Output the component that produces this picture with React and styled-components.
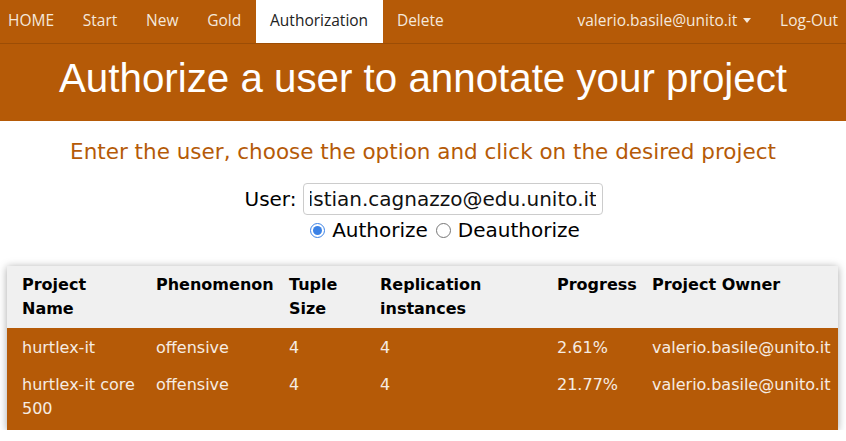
import React, { useEffect, useRef, useState } from 'react';
import styled, { createGlobalStyle } from 'styled-components';

const ORANGE = '#b55a07';

const GlobalStyle = createGlobalStyle`
  body {
    margin: 0;
    font-family: "DejaVu Sans", sans-serif;
    background: #fff;
  }
`;

const NavBar = styled.nav`
  display: flex;
  justify-content: space-between;
  align-items: stretch;
  height: 44px;
  background: ${ORANGE};
  border-bottom: 1px solid #9c4d05;
  box-sizing: border-box;
  font-family: "Open Sans", sans-serif;
  font-size: 15.5px;
`;

const NavGroup = styled.div`
  display: flex;
  align-items: stretch;
`;

const NavItem = styled.a`
  display: flex;
  align-items: center;
  padding: 0 ${(p) => (p.$last ? '8px' : '14.4px')} 4px ${(p) => (p.$first ? '8px' : '14.4px')};
  color: ${(p) => (p.$active ? '#222' : '#f4e8dc')};
  background: ${(p) => (p.$active ? '#fff' : 'transparent')};
  text-decoration: none;
  cursor: pointer;
  white-space: nowrap;
`;

const Caret = styled.span`
  display: inline-block;
  margin-left: 6px;
  margin-top: 2px;
  border-left: 4px solid transparent;
  border-right: 4px solid transparent;
  border-top: 5px solid #f4e8dc;
`;

const Banner = styled.header`
  background: ${ORANGE};
  height: 77px;
  box-sizing: border-box;
  padding-bottom: 8px;
  display: flex;
  align-items: center;
  justify-content: center;
`;

const Title = styled.h1`
  margin: 0;
  color: #fff;
  font-family: "Liberation Sans", Arial, sans-serif;
  font-weight: normal;
  font-size: 40.3px;
`;

const Subtitle = styled.h2`
  margin: 19px 0 0;
  text-align: center;
  color: ${ORANGE};
  font-weight: normal;
  font-size: 21.5px;
  line-height: 24px;
`;

const Form = styled.form`
  display: flex;
  flex-direction: column;
  align-items: center;
  margin-top: 19px;
  font-size: 20px;
`;

const UserRow = styled.label`
  display: flex;
  align-items: center;
  gap: 7px;
  margin-left: 2px;
`;

const UserInput = styled.input`
  width: 300px;
  height: 32px;
  box-sizing: border-box;
  border: 1px solid #ccc;
  border-radius: 4px;
  padding: 0 6px;
  font-family: inherit;
  font-size: 20px;
  color: #111;
  outline: none;
`;

const RadioRow = styled.div`
  display: flex;
  align-items: center;
  margin-top: 3px;
  margin-left: 52px;
  line-height: 24px;
`;

const RadioLabel = styled.label`
  display: flex;
  align-items: center;
  gap: 7px;
  margin-right: 8px;
`;

const Radio = styled.input`
  margin: 0;
  width: 15px;
  height: 15px;
  accent-color: #3b82e6;
`;

const TableWrap = styled.div`
  margin: 24px 8px 0 7px;
  box-shadow: 0 1px 8px rgba(0, 0, 0, 0.35);
`;

const Table = styled.table`
  width: 100%;
  border-collapse: collapse;
  table-layout: fixed;
  font-size: 16px;
  line-height: 24px;
`;

const Th = styled.th`
  text-align: left;
  vertical-align: top;
  padding: 7px 4px 7px 15px;
  background: #f0f0f0;
  color: #000;
  font-weight: bold;
`;

const Row = styled.tr`
  background: ${ORANGE};
  color: #f6ece2;
  cursor: pointer;
`;

const Td = styled.td`
  vertical-align: top;
  padding: ${(p) => (p.$firstRow ? '8px' : '6px')} 4px ${(p) => (p.$lastRow ? '9px' : '7px')} 15px;
`;

const columns = [
  { label: 'Project Name', width: 134 },
  { label: 'Phenomenon', width: 133 },
  { label: 'Tuple Size', width: 91 },
  { label: 'Replication instances', width: 177 },
  { label: 'Progress', width: 95 },
  { label: 'Project Owner', width: 201 },
];

const projects = [
  ['hurtlex-it', 'offensive', '4', '4', '2.61%', 'valerio.basile@unito.it'],
  ['hurtlex-it core 500', 'offensive', '4', '4', '21.77%', 'valerio.basile@unito.it'],
];

const App = () => {
  const [user, setUser] = useState('cristian.cagnazzo@edu.unito.it');
  const [mode, setMode] = useState('authorize');
  const inputRef = useRef(null);

  // keep the end of the address visible, like after typing it
  useEffect(() => {
    if (inputRef.current) inputRef.current.scrollLeft = inputRef.current.scrollWidth;
  }, []);

  return (
    <>
      <GlobalStyle />
      <NavBar>
        <NavGroup>
          <NavItem $first>HOME</NavItem>
          <NavItem>Start</NavItem>
          <NavItem>New</NavItem>
          <NavItem>Gold</NavItem>
          <NavItem $active>Authorization</NavItem>
          <NavItem>Delete</NavItem>
        </NavGroup>
        <NavGroup>
          <NavItem>
            valerio.basile@unito.it
            <Caret />
          </NavItem>
          <NavItem $last>Log-Out</NavItem>
        </NavGroup>
      </NavBar>

      <Banner>
        <Title>Authorize a user to annotate your project</Title>
      </Banner>

      <Subtitle>Enter the user, choose the option and click on the desired project</Subtitle>

      <Form onSubmit={(e) => e.preventDefault()}>
        <UserRow>
          User:
          <UserInput ref={inputRef} value={user} onChange={(e) => setUser(e.target.value)} />
        </UserRow>
        <RadioRow>
          <RadioLabel>
            <Radio type="radio" name="mode" checked={mode === 'authorize'} onChange={() => setMode('authorize')} />
            Authorize
          </RadioLabel>
          <RadioLabel>
            <Radio type="radio" name="mode" checked={mode === 'deauthorize'} onChange={() => setMode('deauthorize')} />
            Deauthorize
          </RadioLabel>
        </RadioRow>
      </Form>

      <TableWrap>
        <Table>
          <colgroup>
            {columns.map((c) => (
              <col key={c.label} style={{ width: c.width }} />
            ))}
          </colgroup>
          <thead>
            <tr>
              {columns.map((c) => (
                <Th key={c.label}>{c.label}</Th>
              ))}
            </tr>
          </thead>
          <tbody>
            {projects.map((p, i) => (
              <Row key={p[0]}>
                {p.map((cell, j) => (
                  <Td key={j} $firstRow={i === 0} $lastRow={i === projects.length - 1}>
                    {cell}
                  </Td>
                ))}
              </Row>
            ))}
          </tbody>
        </Table>
      </TableWrap>
    </>
  );
};

export default App;
